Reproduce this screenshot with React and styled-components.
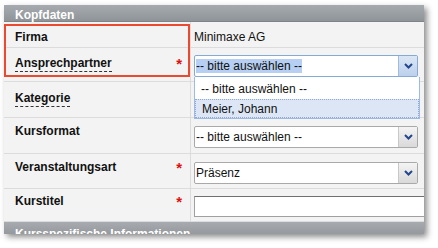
import styled, { createGlobalStyle } from "styled-components";

const Global = createGlobalStyle`
  html, body { margin: 0; padding: 0; background: #ffffff; }
  body { font-family: "Liberation Sans", Arial, sans-serif; }
`;

const Wrapper = styled.div`
  padding: 5px 0 0 4px;
  width: 438px;
  height: 248px;
  box-sizing: border-box;
`;

const Panel = styled.div`
  position: relative;
  width: 420px;
  height: 229px;
  overflow: hidden;
  background: #f3f3f3;
  box-shadow: 3px 3px 6px rgba(0, 0, 0, 0.45);
`;

const SectionBar = styled.div`
  height: 17px;
  padding: ${(p) => (p.$cut ? "5px" : "3px")} 0 0 11px;
  box-sizing: border-box;
  background: linear-gradient(#a7abaf, #8f9498);
  border-bottom: 1px solid #7f8488;
  color: #ffffff;
  font-size: 12px;
  font-weight: bold;
  line-height: 14px;
`;

const Row = styled.div`
  display: grid;
  grid-template-columns: 187px 1fr;
  height: ${(p) => p.$h}px;
  border-bottom: 1px solid #dcdcdc;
  box-sizing: border-box;
`;

const Label = styled.div`
  display: flex;
  justify-content: space-between;
  align-items: flex-start;
  padding: ${(p) => p.$top}px 8px 0 11px;
  border-right: 1px solid #dcdcdc;
  font-size: 12px;
  font-weight: bold;
  line-height: 14px;
  color: #111;
`;

const Help = styled.span`
  border-bottom: 1px dashed #333;
  padding-bottom: 1px;
`;

const Star = styled.span`
  color: #e01010;
  font-size: 15px;
  line-height: 14px;
  margin-top: 1px;
`;

const Value = styled.div`
  position: relative;
  padding: ${(p) => p.$top}px 0 0 3px;
  font-size: 12px;
  line-height: 14px;
  color: #111;
`;

const Select = styled.div`
  display: flex;
  width: 224px;
  height: 22px;
  box-sizing: border-box;
  background: #ffffff;
  border: 1px solid ${(p) => (p.$focus ? "#86a9d6" : "#a9a9a9")};
  border-radius: 2px;
`;

const SelectText = styled.div`
  flex: 1;
  padding: 3px 0 0 1px;
  font-size: 12px;
  line-height: 14px;
  color: #111;
`;

const Marked = styled.span`
  background: #b6cff2;
`;

const Arrow = styled.div`
  width: 18px;
  display: flex;
  align-items: center;
  justify-content: center;
  border-left: 1px solid ${(p) => (p.$focus ? "#9fbbe0" : "#c8c8c8")};
  background: ${(p) =>
    p.$focus
      ? "linear-gradient(#dbe7f6, #bcd0ec)"
      : "linear-gradient(#f4f4f4, #d9d9d9)"};
`;

const List = styled.div`
  position: absolute;
  left: 3px;
  top: 29px;
  width: 226px;
  box-sizing: border-box;
  background: #ffffff;
  border: 1px solid #9dbbe2;
  border-top: none;
  z-index: 2;
`;

const Option = styled.div`
  height: ${(p) => (p.$active ? 19 : 22)}px;
  box-sizing: border-box;
  padding: ${(p) => (p.$active ? "2px" : "5px")} 0 0 6px;
  font-size: 12px;
  line-height: 14px;
  color: #111;
  background: ${(p) => (p.$active ? "#dce6f5" : "#ffffff")};
  border: ${(p) => (p.$active ? "1px dotted #8fa9d4" : "none")};
`;

const TextInput = styled.div`
  width: 240px;
  height: 21px;
  box-sizing: border-box;
  background: #ffffff;
  border: 1px solid #a0a0a0;
  border-top-color: #707070;
`;

const Highlight = styled.div`
  position: absolute;
  left: 0;
  top: 19px;
  width: 186px;
  height: 53px;
  box-sizing: border-box;
  border: 2px solid #ea4a2f;
  pointer-events: none;
  z-index: 3;
`;

function Chevron() {
  return (
    <svg width="9" height="6" viewBox="0 0 9 6">
      <path d="M1 1 L4.5 4.5 L8 1" fill="none" stroke="#24468c" strokeWidth="2" />
    </svg>
  );
}

function Dropdown({ text, focus, marked }) {
  return (
    <Select $focus={focus}>
      <SelectText>{marked ? <Marked>{text}</Marked> : text}</SelectText>
      <Arrow $focus={focus}>
        <Chevron />
      </Arrow>
    </Select>
  );
}

export default function App() {
  return (
    <Wrapper>
      <Global />
      <Panel>
        <SectionBar>Kopfdaten</SectionBar>
        <Row $h={26}>
          <Label $top={8}>Firma</Label>
          <Value $top={8}>Minimaxe AG</Value>
        </Row>
        <Row $h={34}>
          <Label $top={8}>
            <Help>Ansprechpartner</Help>
            <Star>*</Star>
          </Label>
          <Value $top={7}>
            <Dropdown text="-- bitte auswählen --" focus marked />
            <List>
              <Option>-- bitte auswählen --</Option>
              <Option $active>Meier, Johann</Option>
            </List>
          </Value>
        </Row>
        <Row $h={36}>
          <Label $top={9}>
            <Help>Kategorie</Help>
          </Label>
          <Value $top={7} />
        </Row>
        <Row $h={36}>
          <Label $top={6}>Kursformat</Label>
          <Value $top={8}>
            <Dropdown text="-- bitte auswählen --" />
          </Value>
        </Row>
        <Row $h={35}>
          <Label $top={6}>
            Veranstaltungsart
            <Star>*</Star>
          </Label>
          <Value $top={8}>
            <Dropdown text="Präsenz" />
          </Value>
        </Row>
        <Row $h={33}>
          <Label $top={5}>
            Kurstitel
            <Star>*</Star>
          </Label>
          <Value $top={7}>
            <TextInput />
          </Value>
        </Row>
        <SectionBar $cut>Kursspezifische Informationen</SectionBar>
        <Highlight />
      </Panel>
    </Wrapper>
  );
}
